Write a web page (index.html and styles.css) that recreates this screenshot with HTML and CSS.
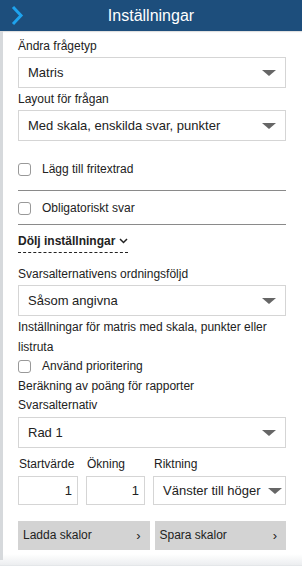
FILE: index.html
```html
<!DOCTYPE html>
<html lang="sv">
<head>
  <meta charset="UTF-8">
  <title>Inställningar</title>
  <link rel="stylesheet" href="styles.css">
</head>
<body>
  <div class="panel">
    <div class="header">
      <span class="toggle">
        <svg width="16" height="22" viewBox="0 0 16 22"><path d="M3 2 L11 10.5 L3 19" fill="none" stroke="#1ea3ee" stroke-width="3"/></svg>
      </span>
      <h1>Inställningar</h1>
      <span></span>
    </div>

    <div class="content">
      <label class="field-label">Ändra frågetyp</label>
      <div class="select">Matris<span class="caret"></span></div>

      <label class="field-label">Layout för frågan</label>
      <div class="select">Med skala, enskilda svar, punkter<span class="caret"></span></div>

      <div class="check-row first"><span class="box"></span>Lägg till fritextrad</div>
      <div class="check-row"><span class="box"></span>Obligatoriskt svar</div>

      <div class="hide-link"><span>Dölj inställningar
        <svg width="9" height="6" viewBox="0 0 9 6"><path d="M1 1 L4.5 4.5 L8 1" fill="none" stroke="#222" stroke-width="1.5"/></svg></span>
      </div>

      <label class="field-label spaced">Svarsalternativens ordningsföljd</label>
      <div class="select">Såsom angivna<span class="caret"></span></div>

      <div class="scoring">
        <p class="text">Inställningar för matris med skala, punkter eller listruta</p>
        <div class="text"><span class="box"></span>Använd prioritering</div>
        <p class="text">Beräkning av poäng för rapporter</p>
        <label class="text">Svarsalternativ</label>
      </div>
      <div class="select">Rad 1<span class="caret"></span></div>

      <div class="scale-row">
        <div class="scale-col">
          <label>Startvärde</label>
          <div class="input">1</div>
        </div>
        <div class="scale-col">
          <label>Ökning</label>
          <div class="input">1</div>
        </div>
        <div class="scale-col">
          <label>Riktning</label>
          <div class="select tight">Vänster till höger<span class="caret"></span></div>
        </div>
      </div>

      <div class="buttons">
        <button>Ladda skalor <span>&#8250;</span></button>
        <button>Spara skalor <span>&#8250;</span></button>
      </div>
    </div>
  </div>
</body>
</html>
```

FILE: styles.css
```css
html, body {
  margin: 0;
  padding: 0;
  background: #ffffff;
}
body {
  font-family: "Liberation Sans", Arial, sans-serif;
  font-size: 12px;
  line-height: 19px;
  color: #222;
  width: 302px;
  height: 566px;
  overflow: hidden;
}
.panel {
  height: 566px;
  background: linear-gradient(to bottom, #fff 0, #fff 554px, #eceef0 565px, #dcdfe2 566px);
}
.header {
  height: 31px;
  background: #1d4e7c;
  display: grid;
  grid-template-columns: 40px 1fr 40px;
  align-items: center;
  box-shadow: 0 1px 1px rgba(0,0,0,0.12);
}
.toggle {
  display: flex;
  padding-left: 10px;
  padding-top: 1px;
}
.header h1 {
  margin: 0;
  text-align: center;
  color: #fff;
  font-size: 16px;
  font-weight: normal;
  white-space: nowrap;
}
.content {
  border-left: 3px solid #d6d9dc;
  padding: 6px 16px 0 15px;
  height: 523px;
}
.field-label {
  display: block;
}
.field-label.spaced {
  margin-top: 12px;
}
.select {
  position: relative;
  height: 29px;
  line-height: 29px;
  font-size: 13px;
  border: 1px solid #d5d5d5;
  padding: 0 9px;
  margin: 1px 0 2px;
  white-space: nowrap;
}
.caret {
  position: absolute;
  right: 9px;
  top: 12px;
  width: 0;
  height: 0;
  border-left: 7px solid transparent;
  border-right: 7px solid transparent;
  border-top: 6px solid #666;
}
.box {
  display: inline-block;
  width: 11px;
  height: 11px;
  border: 1px solid #999;
  border-radius: 3px;
  margin-right: 11px;
  vertical-align: -3px;
}
.check-row {
  padding: 8px 1px 6px 0;
  border-bottom: 1px solid #8a8a8a;
}
.check-row.first {
  margin-top: 11px;
  padding-bottom: 11px;
}
.hide-link {
  margin-top: 8px;
  font-weight: bold;
  line-height: 16px;
}
.hide-link span {
  display: inline-block;
  border-bottom: 1px dashed #222;
  padding-bottom: 3px;
}
.hide-link svg {
  vertical-align: 1px;
}
.scoring {
  margin-top: 1px;
}
.text {
  display: block;
  margin: 0;
  line-height: 19.5px;
}
.scale-row {
  display: grid;
  grid-template-columns: 60px 59px 1fr;
  gap: 8px;
  margin-top: 7px;
}
.scale-col label {
  display: block;
  margin-bottom: 2px;
  padding-left: 1px;
}
.input {
  height: 27px;
  line-height: 27px;
  font-size: 13px;
  border: 1px solid #d5d5d5;
  text-align: right;
  padding-right: 5px;
}
.select.tight {
  margin: 0;
  height: 27px;
  line-height: 27px;
  padding: 0 9px;
}
.select.tight .caret {
  right: 3px;
  top: 11px;
}
.buttons {
  display: grid;
  grid-template-columns: 1fr 1fr;
  gap: 5px;
  margin-top: 16px;
}
.buttons button {
  height: 29px;
  border: none;
  background: #d3d3d3;
  font-family: inherit;
  font-size: 12px;
  color: #222;
  padding: 0 9px 0 5px;
  display: flex;
  justify-content: space-between;
  align-items: center;
}
.buttons button span {
  font-size: 13px;
}
```
